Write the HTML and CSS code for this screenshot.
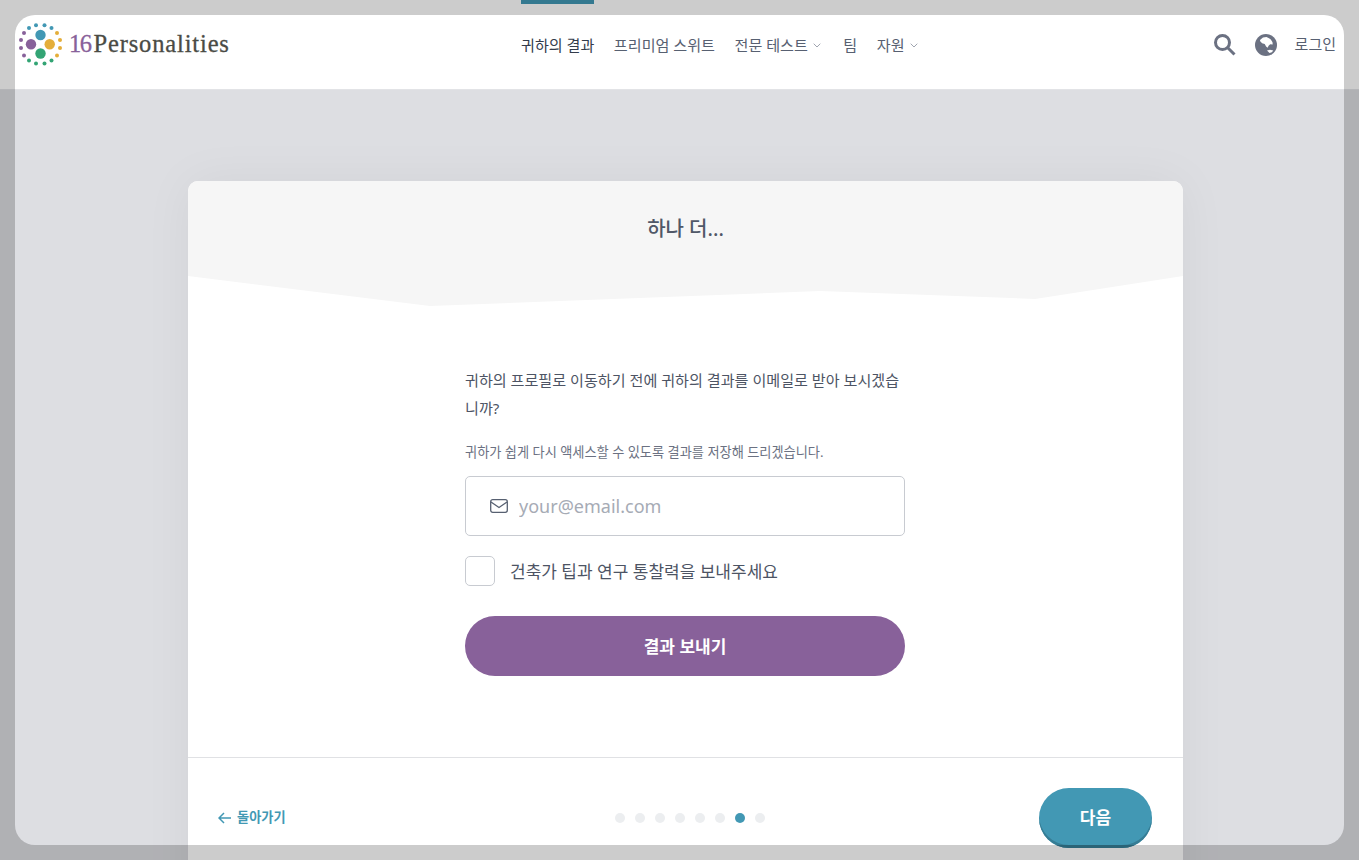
FILE: index.html
```html
<!DOCTYPE html>
<html lang="ko">
<head>
    <meta charset="UTF-8">
    <meta name="viewport" content="width=device-width, initial-scale=1.0">
    <title>16Personalities</title>
    <link rel="stylesheet" href="styles.css">
</head>
<body>
    <!-- Header -->
    <header class="site-header">
        <a class="logo" href="#">
            <svg class="logo-mark" width="46" height="46" viewBox="18 21 46 46">
                <g fill="#4298b4">
                    <circle cx="40.5" cy="35" r="5.2"/>
                    <circle cx="29" cy="28" r="2"/>
                    <circle cx="36" cy="25.2" r="2"/>
                    <circle cx="44.5" cy="25.2" r="2"/>
                    <circle cx="51.5" cy="28" r="2"/>
                </g>
                <g fill="#e4ae3a">
                    <circle cx="49.7" cy="44.3" r="5.2"/>
                    <circle cx="57" cy="33" r="2"/>
                    <circle cx="60" cy="40" r="2"/>
                    <circle cx="60" cy="48" r="2"/>
                    <circle cx="57" cy="55.5" r="2"/>
                </g>
                <g fill="#33a474">
                    <circle cx="40.5" cy="53.5" r="5.2"/>
                    <circle cx="51.5" cy="60.5" r="2"/>
                    <circle cx="44.5" cy="63.5" r="2"/>
                    <circle cx="36" cy="63.5" r="2"/>
                    <circle cx="29" cy="60.5" r="2"/>
                </g>
                <g fill="#88619a">
                    <circle cx="31" cy="44.3" r="5.2"/>
                    <circle cx="24" cy="55.5" r="2"/>
                    <circle cx="21" cy="48" r="2"/>
                    <circle cx="21" cy="40" r="2"/>
                    <circle cx="24" cy="33" r="2"/>
                </g>
            </svg>
            <span class="logo-text"><span class="logo-num">16</span>Personalities</span>
        </a>
        <nav class="main-nav">
            <a class="nav-link active" href="#">귀하의 결과</a>
            <a class="nav-link" href="#">프리미엄 스위트</a>
            <a class="nav-link" href="#">전문 테스트
                <svg class="chevron" width="8" height="5" viewBox="0 0 8 5"><path d="M.7.7 4 4 7.3.7"/></svg>
            </a>
            <a class="nav-link" href="#">팀</a>
            <a class="nav-link" href="#">자원
                <svg class="chevron" width="8" height="5" viewBox="0 0 8 5"><path d="M.7.7 4 4 7.3.7"/></svg>
            </a>
        </nav>
        <div class="header-right">
            <svg class="icon-search" width="24" height="24" viewBox="0 0 24 24">
                <circle cx="9.5" cy="9.5" r="7"/>
                <path d="M14.5 14.5l7 7"/>
            </svg>
            <svg class="icon-globe" width="24" height="24" viewBox="0 0 24 24">
                <circle cx="12" cy="12" r="11" fill="#6b7182"/>
                <path fill="#fff" d="M6 7 9 4.600l3.500-.6 2.500 1.200 1.800 1.300 1.700 2.700.2 2.300-2.500-.2-1.600 1.500-1 2-1.500-1.300-1.400-2.400-2.600-.9-1.900-2z"/>
                <path fill="#fff" d="M13 17.500l3-.7 3.300.7-1.400 1.800-2.400.7z"/>
            </svg>
            <a class="login-link" href="#">로그인</a>
        </div>
    </header>

    <!-- Card -->
    <main class="page-main">
        <section class="card">
            <div class="card-head">
                <h2>하나 더...</h2>
            </div>
            <div class="card-body">
                <p class="lead">귀하의 프로필로 이동하기 전에 귀하의 결과를 이메일로 받아 보시겠습니까?</p>
                <p class="note">귀하가 쉽게 다시 액세스할 수 있도록 결과를 저장해 드리겠습니다.</p>
                <label class="email-field">
                    <svg class="icon-mail" width="18" height="14" viewBox="0 0 18 14">
                        <rect x=".7" y=".7" width="16.6" height="12.6" rx="2"/>
                        <path d="M1 3l8 5.5L17 3"/>
                    </svg>
                    <input type="email" placeholder="your@email.com">
                </label>
                <label class="check-row">
                    <span class="check-box"></span>
                    <span class="check-text">건축가 팁과 연구 통찰력을 보내주세요</span>
                </label>
                <button class="send-btn">결과 보내기</button>
            </div>
            <div class="card-foot">
                <a class="back-link" href="#">
                    <svg width="13" height="12" viewBox="0 0 13 12"><path d="M6 1 1 6l5 5M1 6h12"/></svg>
                    <span class="back-text">돌아가기</span>
                </a>
                <div class="dots">
                    <span class="dot"></span>
                    <span class="dot"></span>
                    <span class="dot"></span>
                    <span class="dot"></span>
                    <span class="dot"></span>
                    <span class="dot"></span>
                    <span class="dot current"></span>
                    <span class="dot"></span>
                </div>
                <button class="next-btn">다음</button>
            </div>
        </section>
    </main>

    <!-- Dim frame over the page -->
    <div class="dim-frame"></div>
</body>
</html>
```
FILE: styles.css
```css
html, body {
    height: 860px;
    margin: 0;
    overflow: hidden;
}
body {
    position: relative;
    font-family: "Noto Sans", "Noto Sans CJK KR", sans-serif;
    background: #dddee2;
    color: #4d5464;
}
a {
    color: inherit;
    text-decoration: none;
}

/* Header */
.site-header {
    display: flex;
    align-items: center;
    height: 89px;
    padding: 0 23px 0 18px;
    background: #fff;
    border-bottom: 1px solid #e2e3e6;
}
.logo {
    display: flex;
    align-items: center;
    gap: 5px;
    width: 211px;
    height: 46px;
    margin-top: -2px;
}
.logo-mark {
    flex: none;
}
.logo-text {
    font-family: "Liberation Serif", serif;
    font-size: 24.5px;
    letter-spacing: 0.85px;
    color: #4a4b45;
    white-space: nowrap;
    -webkit-text-stroke: 0.3px #4a4b45;
}
.logo-num {
    color: #88619a;
    margin-right: 3px;
    letter-spacing: -1.5px;
    -webkit-text-stroke: 0.3px #88619a;
}
.main-nav {
    display: flex;
    gap: 19.5px;
    margin-left: 292px;
}
.nav-link {
    position: relative;
    display: flex;
    align-items: center;
    gap: 5px;
    box-sizing: border-box;
    height: 89px;
    padding-bottom: 2px;
    font-size: 15.1px;
    color: #576071;
    white-space: nowrap;
}
.nav-link.active {
    color: #343c4b;
}
.nav-link.active::before {
    content: "";
    position: absolute;
    top: 0;
    left: 0;
    right: 0;
    height: 4px;
    background: #4298b4;
}
.chevron {
    margin: 4px 3px 0 0;
    fill: none;
    stroke: #a0a5b0;
    stroke-width: 1;
}
.header-right {
    display: flex;
    align-items: center;
    margin-left: auto;
}
.icon-search {
    margin-right: 17px;
    fill: none;
    stroke: #6b7182;
    stroke-width: 3;
}
.icon-globe {
    margin-right: 17px;
}
.login-link {
    padding-bottom: 2px;
    font-size: 15px;
    color: #576071;
}

/* Card */
.page-main {
    padding: 91px 0 0 188px;
}
.card {
    display: flex;
    flex-direction: column;
    width: 995px;
    background: #fff;
    border-radius: 10px;
    box-shadow: 0 0 50px rgba(0, 0, 0, 0.05);
}
.card-head {
    height: 125px;
    background: #f6f6f6;
    border-radius: 10px 10px 0 0;
    clip-path: polygon(0 0, 100% 0, 100% 95px, 847px 118px, 632px 110px, 242px 125px, 0 95px);
}
.card-head h2 {
    margin: 0;
    padding-top: 32px;
    font-size: 20px;
    line-height: 32px;
    font-weight: 500;
    text-align: center;
    color: #505868;
}
.card-body {
    display: flex;
    flex-direction: column;
    width: 440px;
    margin-left: 277px;
    padding: 60px 0 81px;
}
.lead {
    margin: 0;
    font-size: 15.1px;
    line-height: 28px;
}
.note {
    margin: 20px 0 0;
    font-size: 13.2px;
    line-height: 20px;
    color: #6b7182;
}
.email-field {
    display: flex;
    align-items: center;
    gap: 11px;
    box-sizing: border-box;
    height: 60px;
    margin-top: 14px;
    padding: 0 24px;
    border: 1px solid #c8cbd1;
    border-radius: 5px;
}
.email-field input {
    flex: 1;
    min-width: 0;
    border: 0;
    outline: 0;
    padding: 0;
    font-family: inherit;
    font-size: 18px;
    color: #4d5464;
}
.email-field input::placeholder {
    color: #a6abb5;
    opacity: 1;
}
.icon-mail {
    flex: none;
    fill: none;
    stroke: #576071;
    stroke-width: 1.3;
}
.check-row {
    display: flex;
    align-items: center;
    gap: 15px;
    margin-top: 20px;
    font-size: 17px;
    color: #4d5464;
}
.check-box {
    box-sizing: border-box;
    width: 30px;
    height: 30px;
    border: 1px solid #c8cbd1;
    border-radius: 5px;
}
.check-text {
    padding-bottom: 2px;
}
.send-btn {
    height: 60px;
    margin-top: 30px;
    padding-bottom: 3px;
    border: 0;
    border-radius: 30px;
    background: #88619a;
    color: #fff;
    font-family: inherit;
    font-size: 17px;
    font-weight: 700;
}
.card-foot {
    display: flex;
    align-items: flex-start;
    justify-content: space-between;
    height: 200px;
    padding: 30px 31px 0 30px;
    border-top: 1px solid #e0e1e4;
}
.back-link {
    display: flex;
    align-items: center;
    gap: 6px;
    height: 60px;
    font-size: 13.2px;
    font-weight: 700;
    color: #4298b4;
}
.back-text {
    padding-bottom: 3px;
}
.back-link svg {
    fill: none;
    stroke: #4298b4;
    stroke-width: 1.5;
}
.dots {
    display: flex;
    align-items: center;
    gap: 10px;
    height: 60px;
    margin-left: 55px;
}
.dot {
    width: 10px;
    height: 10px;
    border-radius: 50%;
    background: #eceef0;
}
.dot.current {
    background: #4298b4;
}
.next-btn {
    width: 113px;
    height: 60px;
    padding-bottom: 4px;
    border: 0;
    border-radius: 30px;
    background: #4298b4;
    box-shadow: inset 0 -3px 0 #367d95;
    color: #fff;
    font-family: inherit;
    font-size: 17px;
    font-weight: 700;
}

/* Dim frame */
.dim-frame {
    position: absolute;
    top: 15px;
    left: 15px;
    width: 1329px;
    height: 830px;
    border-radius: 20px;
    box-shadow: 0 0 0 60px rgba(0, 0, 0, 0.2);
    pointer-events: none;
}
```
